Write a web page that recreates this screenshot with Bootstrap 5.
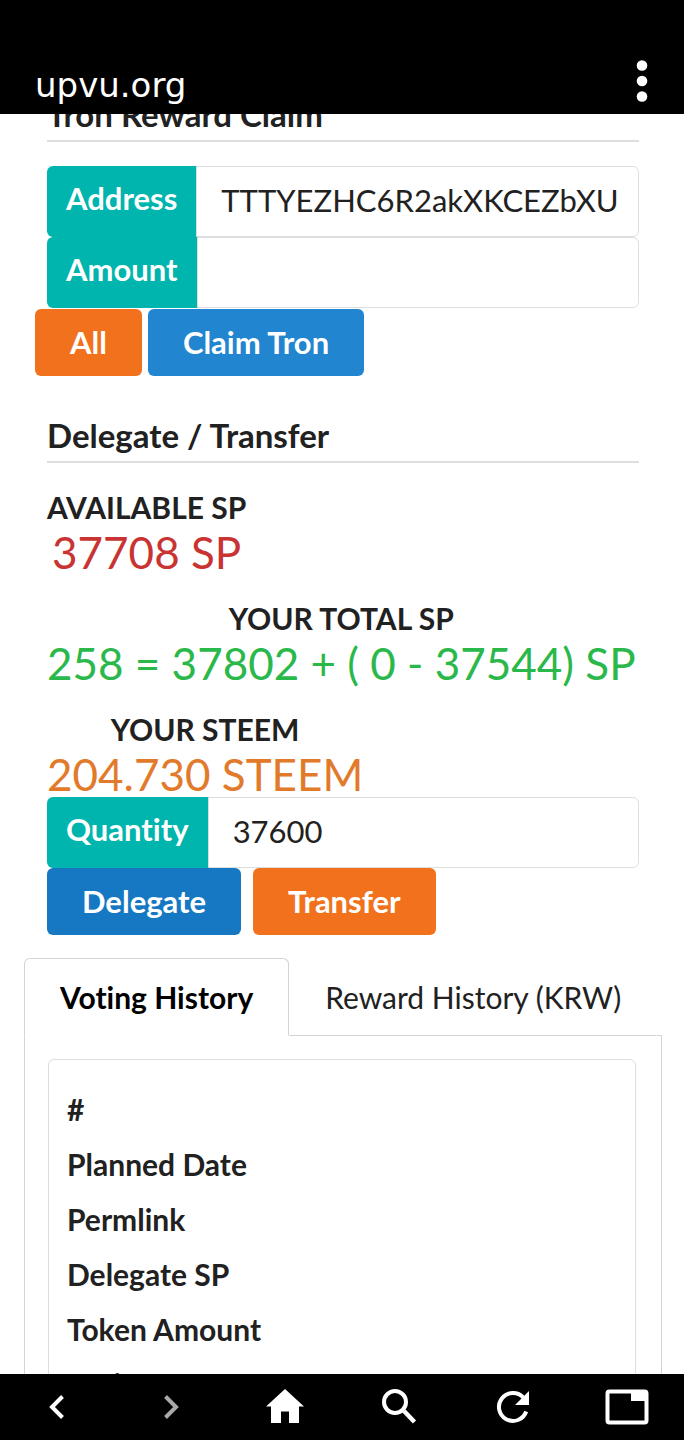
<!DOCTYPE html>
<html lang="en">
<head>
<meta charset="utf-8">
<meta name="viewport" content="width=device-width, initial-scale=1">
<title>upvu.org</title>
<link href="https://cdn.jsdelivr.net/npm/bootstrap@5.3.0/dist/css/bootstrap.min.css" rel="stylesheet">
<style>
  :root { --ink: #212121; --line: #dededf; --tab-line: #d4d4d5; }
  body { font-family: Lato, sans-serif; font-size: 30px; line-height: 42px; color: var(--ink); background: #fff; }
  body, button, input { font-variant-ligatures: none; }
  .topbar { height: 114px; padding: 0 28px 12px 35px; }
  .site-name { font-family: "DejaVu Sans", sans-serif; font-size: 34px; line-height: 34px; }
  .bottombar { height: 66px; }
  .bar-btn { border: 0; background: none; color: #fff; padding: 0; }
  .bar-btn:disabled { color: #a9a9a9; }
  .page-view { min-height: 0; }
  .panel { padding: 0 45px 0 47px; }
  .section-title { font-size: 33px; line-height: 42px; font-weight: 700; padding-bottom: 5px; margin: 0 0 24px; border-bottom: 2px solid var(--line); }
  .scrolled { margin-top: -21px; }
  .field .input-group-text { background: #00b5ad; color: #fff; font-weight: 700; font-size: 31px; line-height: 42px; border: 0; border-radius: 6px; padding: 11px 20px 18px 19px; }
  .field .form-control { font-size: 31px; line-height: 42px; color: var(--ink); height: 71px; padding: 0 20px 3px 24px; border-color: var(--line); border-radius: 6px; min-width: 0; }
  .act { font-size: 31px; line-height: 43px; font-weight: 700; color: #fff; border: 0; border-radius: 6px; padding: 12px 35px; }
  .act:hover { color: #fff; }
  .act-orange { background: #f2711c; }
  .act-blue { background: #2185d0; }
  .act-navy { background: #1678c2; }
  .claim-actions { gap: 6px; margin: 1px 0 38px -12px; }
  .stat-actions { gap: 12px; }
  .stats { gap: 23px; }
  .stat-label { font-weight: 700; line-height: 40px; padding-bottom: 2px; }
  .stat-value { font-size: 44px; line-height: 46px; white-space: nowrap; }
  .t-red { color: #c93433; }
  .t-green { color: #2bb84b; }
  .t-orange { color: #e27a2b; }
  .history { padding: 0 22px 0 24px; margin-top: 23px; }
  .history .nav-tabs { border-bottom: 0; }
  .history .nav-tabs::after { content: ""; flex: 1; border-bottom: 1px solid var(--tab-line); }
  .history .nav-link { color: var(--ink); border: 1px solid transparent; border-bottom-color: var(--tab-line); border-radius: 6px 6px 0 0; padding: 17px 35px; margin: 0; white-space: nowrap; }
  .history .nav-link.active { color: #000; font-weight: 700; border-color: var(--tab-line); border-bottom-color: transparent; }
  .history .tab-pane-box { border: 1px solid var(--tab-line); border-top: 0; padding: 23px 25px 23px 23px; }
  .record { border: 1px solid var(--line); border-radius: 6px; padding: 22px 18px; }
  .record th { padding: 6px 0 7px; font-weight: 700; }
</style>
</head>
<body class="vh-100 d-flex flex-column overflow-hidden">
<header class="topbar bg-black text-white d-flex align-items-end justify-content-between flex-shrink-0">
  <span class="site-name">upvu.org</span>
  <button class="bar-btn d-flex" type="button" aria-label="Menu">
    <svg width="28" height="42" viewBox="0 0 28 42" fill="currentColor"><circle cx="14" cy="5.500" r="5.300"/><circle cx="14" cy="21" r="5.300"/><circle cx="14" cy="36.500" r="5.300"/></svg>
  </button>
</header>

<main class="page-view flex-fill overflow-hidden">
  <section class="panel">
    <h3 class="section-title scrolled">Tron Reward Claim</h3>
    <div class="input-group flex-nowrap field">
      <label class="input-group-text" for="address">Address</label>
      <input class="form-control" id="address" type="text" value="TTTYEZHC6R2akXKCEZbXU">
    </div>
    <div class="input-group flex-nowrap field">
      <label class="input-group-text" for="amount">Amount</label>
      <input class="form-control" id="amount" type="text">
    </div>
    <div class="claim-actions d-flex">
      <button class="btn act act-orange" type="button">All</button>
      <button class="btn act act-blue" type="button">Claim Tron</button>
    </div>

    <h3 class="section-title">Delegate / Transfer</h3>
    <div class="stats d-flex flex-column align-items-start">
      <div class="text-center">
        <div class="stat-label">AVAILABLE SP</div>
        <div class="stat-value t-red">37708 SP</div>
      </div>
      <div class="text-center">
        <div class="stat-label">YOUR TOTAL SP</div>
        <div class="stat-value t-green">258 = 37802 + ( 0 - 37544) SP</div>
      </div>
      <div class="text-center">
        <div class="stat-label">YOUR STEEM</div>
        <div class="stat-value t-orange">204.730 STEEM</div>
      </div>
    </div>
    <div class="input-group flex-nowrap field">
      <label class="input-group-text" for="quantity">Quantity</label>
      <input class="form-control" id="quantity" type="text" value="37600">
    </div>
    <div class="stat-actions d-flex">
      <button class="btn act act-navy" type="button">Delegate</button>
      <button class="btn act act-orange" type="button">Transfer</button>
    </div>
  </section>

  <section class="history">
    <div class="nav nav-tabs flex-nowrap" role="tablist">
      <button class="nav-link active" type="button" role="tab" aria-selected="true">Voting History</button>
      <button class="nav-link" type="button" role="tab" aria-selected="false">Reward History (KRW)</button>
    </div>
    <div class="tab-pane-box">
      <div class="record">
        <table class="w-100">
          <tbody>
            <tr><th scope="row">#</th></tr>
            <tr><th scope="row">Planned Date</th></tr>
            <tr><th scope="row">Permlink</th></tr>
            <tr><th scope="row">Delegate SP</th></tr>
            <tr><th scope="row">Token Amount</th></tr>
            <tr><th scope="row">Voting Power</th></tr>
          </tbody>
        </table>
      </div>
    </div>
  </section>
</main>

<nav class="bottombar bg-black d-flex flex-shrink-0" aria-label="Browser">
  <button class="bar-btn flex-fill w-100" type="button" aria-label="Back"><svg width="48" height="48" viewBox="0 0 48 48" fill="none" stroke="currentColor" stroke-width="4"><path d="M29.500 12.500 19 23 29.500 33.500"/></svg></button>
  <button class="bar-btn flex-fill w-100" type="button" aria-label="Forward" disabled><svg width="48" height="48" viewBox="0 0 48 48" fill="none" stroke="currentColor" stroke-width="4"><path d="M18.500 12.500 29 23 18.500 33.500"/></svg></button>
  <button class="bar-btn flex-fill w-100" type="button" aria-label="Home"><svg width="48" height="48" viewBox="0 0 48 48" fill="currentColor"><path d="M24 5 5 22.500h5V39h10V27.500h8V39h10V22.500h5z"/></svg></button>
  <button class="bar-btn flex-fill w-100" type="button" aria-label="Search"><svg width="48" height="48" viewBox="0 0 48 48" fill="none" stroke="currentColor"><circle cx="20" cy="18" r="11" stroke-width="4"/><path stroke-width="4.500" d="M29 27 39.500 38"/></svg></button>
  <button class="bar-btn flex-fill w-100" type="button" aria-label="Reload"><svg width="48" height="48" viewBox="0 0 48 48" fill="none" stroke="currentColor"><path stroke-width="4" d="M34.500 13.700A14 14 0 1 0 37.200 27.500"/><path fill="currentColor" stroke="none" d="M40 7v14H26z"/></svg></button>
  <button class="bar-btn flex-fill w-100" type="button" aria-label="Tabs"><svg width="48" height="48" viewBox="0 0 48 48" fill="none" stroke="currentColor"><rect x="4.500" y="7.500" width="39" height="31" rx="2" stroke-width="4"/><path fill="currentColor" stroke="none" d="M28 7h16v10H28z"/></svg></button>
</nav>
<script src="https://cdn.jsdelivr.net/npm/bootstrap@5.3.0/dist/js/bootstrap.bundle.min.js"></script>
</body>
</html>
